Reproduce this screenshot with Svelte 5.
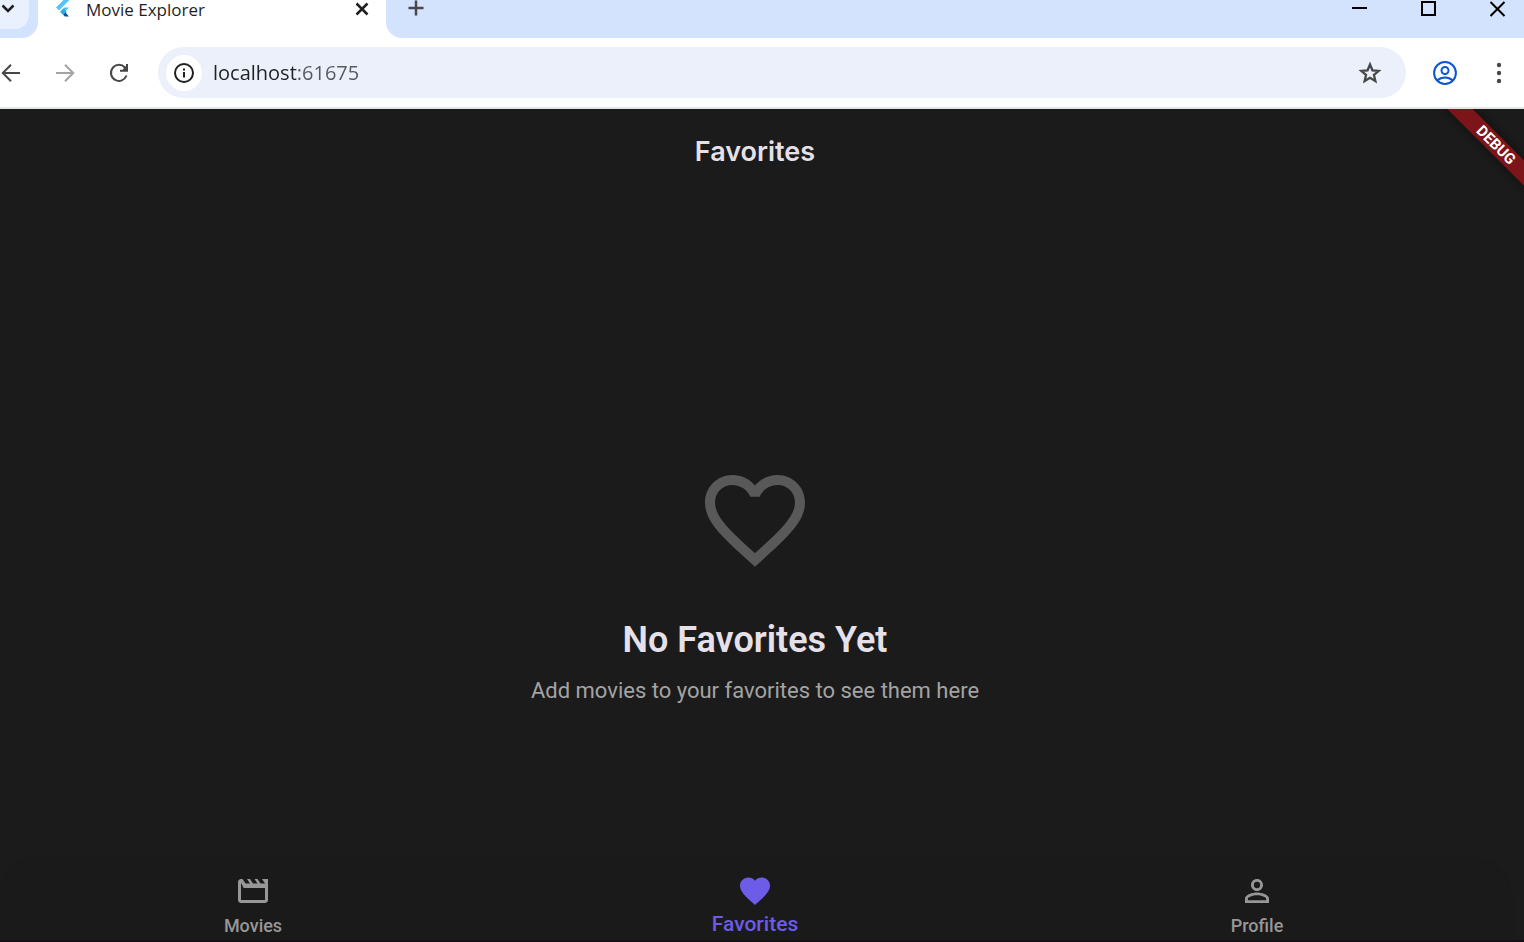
<script lang="ts">
	type NavItem = { id: string; label: string; icon: string };

	const navItems: NavItem[] = [
		{
			id: 'movies',
			label: 'Movies',
			icon: 'M4 6.47L5.76 10H20v8H4V6.47M22 4h-4l2 3h-3l-2-3h-2l2 3h-3l-2-3H8l2 3H7L5 4H4c-1.1 0-1.99.9-1.99 2L2 18c0 1.1.9 2 2 2h16c1.1 0 2-.9 2-2V4z'
		},
		{
			id: 'favorites',
			label: 'Favorites',
			icon: 'M12 21.35l-1.45-1.32C5.4 15.36 2 12.28 2 8.5 2 5.42 4.42 3 7.5 3c1.74 0 3.41.81 4.5 2.09C13.09 3.81 14.76 3 16.5 3 19.58 3 22 5.42 22 8.5c0 3.78-3.4 6.86-8.55 11.54L12 21.35z'
		},
		{
			id: 'profile',
			label: 'Profile',
			icon: 'M12 5.9a2.1 2.1 0 1 1 0 4.2 2.1 2.1 0 0 1 0-4.2m0 9c2.97 0 6.1 1.46 6.1 2.1v1.1H5.9V17c0-.64 3.13-2.1 6.1-2.1M12 4C9.79 4 8 5.79 8 8s1.79 4 4 4 4-1.79 4-4-1.79-4-4-4zm0 9c-2.67 0-8 1.34-8 4v3h16v-3c0-2.66-5.33-4-8-4z'
		}
	];

	let active = $state('favorites');
	let address = $state('localhost:61675');
</script>

<div class="window">
	<header class="tab-strip">
		<div class="strip-start">
			<button class="tab-search" aria-label="Search tabs">
				<svg width="16" height="16" viewBox="0 0 16 16" aria-hidden="true">
					<path d="M2.5 5.5L8 11l5.5-5.5" />
				</svg>
			</button>
		</div>
		<div class="tab">
			<svg class="favicon" width="20" height="24" viewBox="0 0 20 24" aria-hidden="true">
				<path fill="#54c5f8" d="M9.5 2H15.500L5 12.500 2 9.500z" />
				<path fill="#40c4ff" d="M10.500 9.500H15L10 14.500 7 13z" />
				<path fill="#29a9ee" d="M6 14L9.500 10.500 12.800 14 9.500 17z" />
				<path fill="#01579b" d="M9.200 16.800L11.500 14.500 15 18.500H10.800z" />
			</svg>
			<span class="tab-title">Movie Explorer</span>
			<button class="tab-close" aria-label="Close tab">
				<svg width="16" height="16" viewBox="0 0 16 16" aria-hidden="true">
					<path d="M2.5 1.500L13.500 12.500M13.500 1.500L2.500 12.500" />
				</svg>
			</button>
		</div>
		<div class="strip-end">
			<button class="new-tab" aria-label="New tab">
				<svg width="16" height="16" viewBox="0 0 16 16" aria-hidden="true">
					<path d="M8 .5v15M.5 8h15" />
				</svg>
			</button>
			<div class="window-controls">
				<button aria-label="Minimize">
					<svg width="16" height="16" viewBox="0 0 16 16" aria-hidden="true"><path d="M0 7h15" /></svg>
				</button>
				<button aria-label="Maximize">
					<svg width="16" height="16" viewBox="0 0 16 16" aria-hidden="true">
						<rect x="1" y="1" width="13" height="13" />
					</svg>
				</button>
				<button aria-label="Close">
					<svg width="16" height="16" viewBox="0 0 16 16" aria-hidden="true">
						<path d="M.5 1l14 14M14.500 1L.5 15" />
					</svg>
				</button>
			</div>
		</div>
	</header>

	<div class="toolbar">
		<div class="history">
			<button aria-label="Back">
				<svg width="20" height="20" viewBox="0 0 20 20" aria-hidden="true">
					<path d="M19 10H2M10 1.800L1.800 10l8.200 8.200" />
				</svg>
			</button>
			<button class="dim" aria-label="Forward">
				<svg width="20" height="20" viewBox="0 0 20 20" aria-hidden="true">
					<path d="M1 10h17M10 1.800l8.200 8.200-8.200 8.200" />
				</svg>
			</button>
			<button aria-label="Reload">
				<svg width="20" height="20" viewBox="0 0 20 20" aria-hidden="true">
					<path d="M17.500 12.500A8 8 0 1 1 15.700 4.300L17.800 6.500M18 1v6.800h-7M14.500 7l3-3" />
				</svg>
			</button>
		</div>
		<div class="address">
			<button class="site-info" aria-label="Site information">
				<svg width="20" height="20" viewBox="0 0 20 20" aria-hidden="true">
					<circle cx="10" cy="10" r="9" />
					<path d="M10 9v5.500M10 5.500v2" />
				</svg>
			</button>
			<input type="text" aria-label="Address" spellcheck="false" bind:value={address} />
			<button class="bookmark" aria-label="Bookmark this tab">
				<svg width="24" height="24" viewBox="0 0 24 24" aria-hidden="true">
					<path
						d="M12 3.500l2.450 5.800 6.250.540-4.750 4.120 1.430 6.120L12 16.850l-5.380 3.230 1.430-6.120L3.300 9.840l6.250-.540z"
					/>
				</svg>
			</button>
		</div>
		<button class="account" aria-label="Profile">
			<svg width="26" height="26" viewBox="0 0 26 26" aria-hidden="true">
				<circle cx="13" cy="13" r="10.900" />
				<circle cx="13" cy="10.500" r="3.500" />
				<path d="M5.500 20.300c4-3.900 11-3.900 15 0" />
			</svg>
		</button>
		<button class="menu" aria-label="Menu">
			<svg width="24" height="24" viewBox="0 0 24 24" aria-hidden="true">
				<circle cx="12" cy="4" r="2.200" />
				<circle cx="12" cy="12" r="2.200" />
				<circle cx="12" cy="20" r="2.200" />
			</svg>
		</button>
	</div>

	<div class="app">
		<div class="debug-banner">DEBUG</div>

		<header class="app-bar">
			<h1>Favorites</h1>
		</header>

		<main class="empty">
			<svg width="120" height="120" viewBox="0 0 24 24" aria-hidden="true">
				<path
					d="M16.500 3c-1.740 0-3.410.81-4.500 2.090C10.910 3.810 9.240 3 7.500 3 4.420 3 2 5.420 2 8.500c0 3.780 3.400 6.860 8.550 11.540L12 21.350l1.450-1.320C18.600 15.360 22 12.280 22 8.500 22 5.420 19.580 3 16.500 3zm-4.400 15.550l-.1.1-.1-.1C7.140 14.240 4 11.390 4 8.500 4 6.500 5.500 5 7.500 5c1.540 0 3.040.99 3.570 2.360h1.870C13.460 5.990 14.960 5 16.500 5c2 0 3.500 1.500 3.500 3.500 0 2.890-3.140 5.740-7.900 10.050z"
				/>
			</svg>
			<h2>No Favorites Yet</h2>
			<p>Add movies to your favorites to see them here</p>
		</main>

		<nav class="bottom-nav">
			{#each navItems as item (item.id)}
				<button
					class:active={active === item.id}
					aria-current={active === item.id ? 'page' : undefined}
					onclick={() => (active = item.id)}
				>
					<svg width="36" height="36" viewBox="0 0 24 24" aria-hidden="true">
						<path d={item.icon} />
					</svg>
					<span>{item.label}</span>
				</button>
			{/each}
		</nav>
	</div>
</div>

<style>
	:global(body) {
		background: #1b1b1b;
	}

	.window {
		display: flex;
		flex-direction: column;
		min-height: 100vh;
		background: #fff;
		font-family: 'Open Sans', 'Noto Sans', sans-serif;
	}

	button {
		display: flex;
		align-items: center;
		justify-content: center;
		flex-shrink: 0;
		padding: 0;
		border: 0;
		background: none;
		color: inherit;
		font: inherit;
		cursor: pointer;
	}

	svg {
		display: block;
		flex-shrink: 0;
	}

	.tab-strip {
		display: flex;
		height: 38px;
	}

	.tab-strip button svg,
	.history svg,
	.address svg,
	.account svg {
		fill: none;
		stroke: currentColor;
		stroke-width: 2;
	}

	.strip-start {
		width: 38px;
		background: #d3e3fd;
		border-radius: 0 0 16px 0;
	}

	.tab-search {
		justify-content: flex-start;
		width: 29px;
		height: 29px;
		padding-bottom: 13px;
		box-sizing: border-box;
		background: #e9f0fe;
		border-radius: 0 0 14px 0;
		color: #1f1f1f;
	}

	.tab {
		display: flex;
		align-items: center;
		width: 348px;
		height: 20px;
		padding: 0 16px;
		box-sizing: border-box;
		color: #1f1f1f;
	}

	.favicon {
		margin-right: 12px;
	}

	.tab-title {
		flex: 1;
		font-size: 17px;
		line-height: 20px;
	}

	.tab-strip .tab-search svg,
	.tab-strip .tab-close svg,
	.tab-strip .new-tab svg {
		stroke-width: 2.5;
	}

	.strip-end {
		display: flex;
		flex: 1;
		justify-content: space-between;
		align-items: flex-start;
		padding: 0 18px 0 22px;
		background: #d3e3fd;
		border-radius: 0 0 0 16px;
	}

	.new-tab {
		height: 16px;
		color: #474747;
	}

	.window-controls {
		display: flex;
		gap: 53px;
		height: 18px;
		color: #000;
	}

	.toolbar {
		display: flex;
		align-items: center;
		height: 69px;
		padding-right: 13px;
		border-bottom: 2px solid #e3e6e6;
		color: #474747;
	}

	.history {
		display: flex;
		gap: 34px;
		padding-left: 1px;
	}

	.dim {
		color: #a3a3a3;
	}

	.address {
		display: flex;
		align-items: center;
		flex: 1;
		height: 51px;
		margin: 0 26px 0 29px;
		padding: 0 24px 0 8px;
		box-sizing: border-box;
		border-radius: 26px;
		background: #ecf0fa;
	}

	.site-info {
		width: 36px;
		height: 36px;
		border-radius: 50%;
		background: #fff;
		color: #1f1f1f;
	}

	.address .bookmark svg {
		stroke-width: 2.3;
	}

	.address input {
		flex: 1;
		min-width: 0;
		height: 30px;
		margin: 0 11px;
		padding: 0;
		border: 0;
		outline: none;
		/* host is dark, port is muted */
		background: linear-gradient(90deg, #1f2023 84px, #55585e 84px);
		background-clip: text;
		color: transparent;
		caret-color: #1f2023;
		font: 20px/30px 'Open Sans', 'Noto Sans', sans-serif;
	}

	.account {
		color: #0b57d0;
	}

	.menu {
		margin-left: 29px;
	}

	.menu svg {
		fill: #474747;
	}

	.app {
		position: relative;
		display: flex;
		flex: 1;
		flex-direction: column;
		padding-right: 14px;
		overflow: hidden;
		background: #1b1b1b;
		border-bottom: 2px solid #151015;
		font-family: Roboto, sans-serif;
	}

	.debug-banner {
		position: absolute;
		top: 27px;
		right: -52px;
		width: 160px;
		transform: rotate(45deg);
		background: #7c151a;
		box-shadow: 0 0 9px rgba(0, 0, 0, 0.5);
		color: #fff;
		font-size: 15px;
		font-weight: 700;
		line-height: 18px;
		text-align: center;
	}

	.app-bar {
		display: flex;
		align-items: center;
		justify-content: center;
		height: 86px;
	}

	h1 {
		margin: 0;
		color: #e6e1e9;
		font-family: Inter, sans-serif;
		font-size: 27px;
		font-weight: 600;
		line-height: 36px;
	}

	.empty {
		display: flex;
		flex: 1;
		flex-direction: column;
		align-items: center;
		justify-content: center;
		padding-top: 110px;
	}

	.empty svg {
		fill: #59595a;
	}

	h2 {
		margin: 36px 0 12px;
		color: #e6e1e9;
		font-size: 36px;
		font-weight: 600;
		line-height: 48px;
	}

	p {
		margin: 0;
		color: #a3a3a4;
		font-size: 22px;
		line-height: 30px;
	}

	.bottom-nav {
		display: flex;
		height: 80px;
		padding: 0 2px;
		border-radius: 36px 36px 0 0;
		background: #1a1a1a;
		box-shadow: 0 0 4px rgba(0, 0, 0, 0.1);
	}

	.bottom-nav button {
		flex: 1;
		flex-direction: column;
		justify-content: flex-start;
		padding-top: 13px;
		color: #979798;
		font-size: 18px;
		font-weight: 500;
		line-height: 34px;
	}

	.bottom-nav svg {
		fill: currentColor;
	}

	.bottom-nav .active {
		color: #6c5ce7;
		font-size: 21px;
		line-height: 30px;
	}
</style>
